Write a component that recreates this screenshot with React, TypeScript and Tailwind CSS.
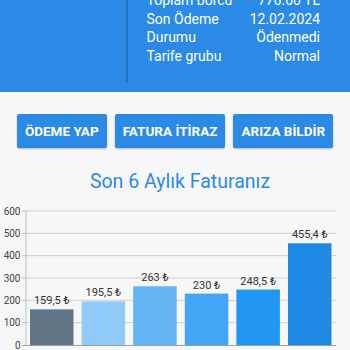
// Fatura özeti ekranı: üstte borç bilgisi, altta işlem butonları ve son 6 ayın grafiği.
const INFO = [
  ['Toplam borcu', '776.00 TL'],
  ['Son Ödeme', '12.02.2024'],
  ['Durumu', 'Ödenmedi'],
  ['Tarife grubu', 'Normal'],
];

const ACTIONS = ['ÖDEME YAP', 'FATURA İTİRAZ', 'ARIZA BİLDİR'];

const BILLS = [
  { value: 159.5, color: '#607585' },
  { value: 195.5, color: '#90caf9' },
  { value: 263, color: '#64b5f6' },
  { value: 230, color: '#42a5f5' },
  { value: 248.5, color: '#2196f3' },
  { value: 455.4, color: '#1e88e5' },
];

// grafik koordinatları (svg içi, üstü sayfada y=194)
const TOP = 194;
const AXIS_X = 26;
const RIGHT_X = 336;
const ZERO_Y = 345 - TOP;
const PX_PER_UNIT = 134 / 600;
const y = (v: number) => ZERO_Y - v * PX_PER_UNIT;
const fmt = (v: number) => `${String(v).replace('.', ',')} ₺`;

function BillChart() {
  return (
    <svg width={350} height={156} className="block" style={{ fontFamily: 'Roboto, "DejaVu Sans", sans-serif' }}>
      {[600, 500, 400, 300, 200, 100].map((t) => (
        <g key={t}>
          <line x1={AXIS_X} x2={RIGHT_X} y1={y(t)} y2={y(t)} stroke="#cfcfcf" strokeWidth={1} />
          <line x1={22} x2={AXIS_X} y1={y(t)} y2={y(t)} stroke="#bdbdbd" strokeWidth={1} />
        </g>
      ))}
      {[600, 500, 400, 300, 200, 100, 0].map((t) => (
        <text key={t} x={20.5} y={y(t) + 3.6} textAnchor="end" fontSize={10} fill="#444">
          {t}
        </text>
      ))}
      <line x1={AXIS_X} x2={AXIS_X} y1={y(600)} y2={ZERO_Y} stroke="#bdbdbd" strokeWidth={1} />
      {BILLS.map((b, i) => {
        const x = 30 + i * 51.6;
        return (
          <g key={i}>
            <rect x={x} y={y(b.value)} width={43.5} height={ZERO_Y - y(b.value)} fill={b.color} />
            <text x={x + 21.75} y={y(b.value) - 5} textAnchor="middle" fontSize={11} fill="#333">
              {fmt(b.value)}
            </text>
          </g>
        );
      })}
      <line x1={22} x2={RIGHT_X} y1={ZERO_Y + 0.5} y2={ZERO_Y + 0.5} stroke="#9e9e9e" strokeWidth={1} />
    </svg>
  );
}

export default function App() {
  return (
    <main className="w-[350px] h-[350px] overflow-hidden bg-[#f7f7f7] font-['Roboto',sans-serif]">
      <header className="h-[92px] bg-[#2a8ae6] flex overflow-hidden">
        <div className="w-[126px] shrink-0" />
        <div className="w-[1.5px] h-[83px] bg-[#1f6fc2]" />
        <div className="flex-1 pl-[19px] pr-[30px] -mt-[9px] text-white text-[14px] leading-[18.5px]">
          {INFO.map(([label, value]) => (
            <div key={label} className="flex justify-between">
              <span>{label}</span>
              <span>{value}</span>
            </div>
          ))}
        </div>
      </header>

      <div className="mt-[22px] flex justify-center gap-2">
        {ACTIONS.map((a) => (
          <button
            key={a}
            className="h-[34px] px-[8px] rounded-[2px] bg-[#2a8ae6] text-white text-[13.5px] font-bold shadow-[0_1px_2px_rgba(0,0,0,0.25)]"
          >
            {a}
          </button>
        ))}
      </div>

      <h2 className="mt-[21px] pl-[10px] text-center text-[19.5px] leading-[25px] text-[#2a8ae6]">
        Son 6 Aylık Faturanız
      </h2>

      <BillChart />
    </main>
  );
}
